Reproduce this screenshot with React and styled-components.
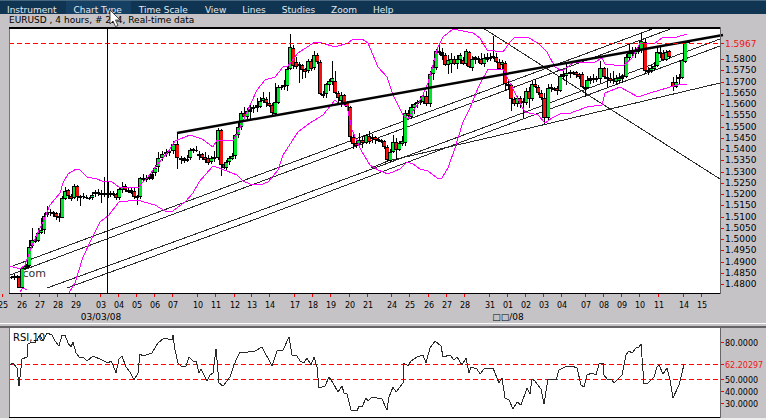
import styled, { createGlobalStyle } from 'styled-components'

const GlobalStyle = createGlobalStyle`
  body {
    margin: 0;
    background: #f0eff0;
    font-family: "DejaVu Sans", Verdana, sans-serif;
  }
`

const Window = styled.main`
  position: relative;
  overflow: hidden;
  background: #c6c3c6;
`

const MenuBar = styled.nav`
  display: flex;
  height: 14px;
  box-sizing: border-box;
  border-top: 1px solid #47667f;
  background: #103552;
  overflow: hidden;
`

const MenuButton = styled.button`
  height: 18px;
  padding: 0 8px;
  border: 0;
  background: ${({ $active }) => ($active ? '#163f64' : 'transparent')};
  color: #e3e9ee;
  font-family: inherit;
  font-size: 9px;
  line-height: 18px;
  white-space: nowrap;

  &:first-child {
    padding-left: 7px;
  }

  &:nth-child(-n + 3) {
    padding-right: 9px;
  }
`

const Title = styled.h1`
  height: 13px;
  margin: 0;
  padding-left: 9px;
  color: #000;
  font-size: 9px;
  font-weight: 400;
  line-height: 13px;
  white-space: nowrap;
`

const Chart = styled.svg`
  display: block;
  width: 100%;
  height: auto;
  overflow: hidden;
`

const RsiSection = styled.section`
  border-top: 1px solid #fff;

  &::before {
    content: '';
    display: block;
    height: 2px;
    border-bottom: 2px solid #656365;
  }
`

const Cursor = styled.svg`
  position: absolute;
  left: 109px;
  top: 9px;
  width: 12px;
  height: 19px;
  pointer-events: none;
`

const Thin = styled.path`
  fill: none;
  stroke: ${({ $color }) => $color || '#2a2a2a'};
  stroke-width: 1;
  shape-rendering: crispEdges;
`

const Level = styled.path`
  stroke: #f00;
  stroke-width: 1;
  stroke-dasharray: 5 3;
  shape-rendering: crispEdges;
`

const Tick = styled.path`
  stroke: #f00;
  stroke-width: 1;
  shape-rendering: crispEdges;
`

const Label = styled.text`
  fill: ${({ $color }) => $color || '#000'};
  font-size: ${({ $size }) => $size || 9}px;
  text-anchor: ${({ $anchor }) => $anchor || 'start'};
`

const MENU = ['Instrument', 'Chart Type', 'Time Scale', 'View', 'Lines', 'Studies', 'Zoom', 'Help']

// x, body top, body bottom, high, low, colour (g up, r down, k flat)
const CANDLES = `
11 277 278 276 279 k|14 276 278 274 280 k|17 276 278 275 279 k|19 277 288 276 288 r|22 268 288 267 288 g
25 266 269 264 269 g|27 264 268 262 268 k|29 247 266 240 267 g|32 240 246 228 248 g|35 240 242 236 243 k
38 233 241 228 242 g|41 230 233 218 234 g|44 216 230 213 234 g|47 212 215 206 217 k|50 212 213 209 216 k
53 212 214 211 217 r|56 213 217 212 220 r|59 216 218 213 222 k|62 198 218 196 218 g|65 191 199 187 200 g
68 190 196 189 199 r|71 196 199 194 201 r|74 186 198 184 199 g|77 186 197 185 201 r|80 196 198 195 206 g
83 196 197 193 199 k|86 197 198 195 199 k|89 198 199 197 200 r|92 195 198 192 200 g|95 192 194 190 197 k
98 192 194 189 196 k|101 193 195 190 203 k|104 193 195 177 197 k|108 193 195 182 198 k|110 194 195 191 197 k
113 193 195 191 196 g|116 194 198 193 200 r|119 189 198 187 200 g|122 187 190 182 193 g|125 186 190 184 192 r
128 190 192 187 193 r|131 190 193 188 194 k|134 191 197 188 199 r|137 196 198 195 205 r|140 178 197 177 199 g
143 178 180 174 181 k|146 178 180 175 182 g|149 177 179 174 180 k|152 174 179 171 180 k|155 168 173 165 176 g
158 158 167 152 172 g|162 154 158 151 161 g|166 152 154 149 157 k|169 151 153 150 156 k|173 144 151 141 154 g
177 144 158 133 169 r|181 158 160 156 164 r|184 158 161 157 163 k|187 159 161 155 162 g|190 150 158 148 160 g
193 149 151 148 153 r|196 150 151 146 152 k|199 154 156 151 160 k|202 154 158 153 160 r|205 157 160 152 163 r
208 158 163 155 165 r|211 158 162 156 164 g|214 157 159 151 162 k|218 130 158 128 160 g|221 130 165 129 176 r
224 164 168 162 169 r|226 162 168 160 170 g|229 158 162 156 165 g|232 156 159 153 160 g|235 135 156 134 159 g
238 127 135 121 138 g|241 113 127 111 130 g|244 113 117 107 119 r|247 111 117 108 119 g|250 109 112 103 120 k
253 107 109 105 113 k|257 105 108 98 112 k|260 101 107 97 108 g|263 98 101 92 103 g|266 99 103 97 107 r
269 103 106 92 107 r|272 105 113 103 116 r|275 102 114 83 115 g|278 87 103 85 104 g|281 87 88 85 90 k
284 85 87 80 90 k|287 69 86 66 91 g|290 47 69 34 70 g|293 48 66 45 69 r|296 62 67 57 69 r
299 64 66 62 83 k|302 65 70 64 79 r|305 69 72 68 78 r|308 61 71 59 73 g|311 61 69 59 71 r
314 55 68 51 70 g|317 55 62 53 64 r|320 62 94 60 95 r|323 94 96 91 98 r|326 84 94 83 98 g
329 81 85 79 91 g|332 78 82 61 85 g|335 81 93 71 94 r|338 93 98 91 103 r|341 95 101 92 107 g
344 95 103 94 106 r|347 102 107 101 110 r|350 107 137 106 142 r|353 137 144 134 149 r|356 143 146 139 148 r
359 140 144 133 146 g|362 140 143 136 148 r|366 135 143 134 144 g|369 136 142 131 144 r|372 137 139 134 143 k
375 137 140 136 144 r|378 139 141 138 142 k|381 140 142 139 143 r|384 141 147 140 149 r|387 147 160 145 162 r
390 152 161 149 162 g|393 142 152 135 153 g|396 142 150 138 160 r|399 143 150 141 151 g|402 141 144 136 146 g
405 113 143 110 146 g|408 113 116 110 118 r|411 107 117 104 119 g|414 104 108 103 114 g|417 102 104 100 108 k
420 101 103 96 105 k|423 96 102 93 104 g|426 96 104 91 106 r|430 74 104 71 107 g|433 67 74 60 80 g
436 51 68 49 70 g|439 51 53 44 55 k|442 52 56 48 60 k|445 55 65 53 66 r|448 60 65 55 74 g
451 59 64 53 73 g|454 59 64 56 65 r|457 59 64 55 69 g|460 55 60 53 64 g|463 60 64 57 65 r
466 51 64 49 66 g|469 52 67 51 68 r|472 59 68 56 71 g|475 57 60 56 64 k|478 58 60 56 63 k
481 59 64 53 65 r|484 58 64 54 67 g|487 57 60 53 62 k|490 57 59 53 61 k|493 56 58 36 59 k
496 57 62 53 63 r|499 62 69 59 70 r|502 62 65 60 70 g|505 63 84 61 91 r|508 84 86 81 90 r
511 85 99 84 111 r|514 99 104 97 106 r|517 98 104 96 107 g|520 98 104 96 108 r|523 101 103 98 118 g
526 91 103 88 105 g|529 91 99 87 108 r|532 84 99 81 101 g|535 84 87 79 88 r|538 87 93 85 95 r
541 93 98 90 100 r|544 98 118 93 124 r|548 88 118 84 120 g|551 87 89 84 92 k|554 88 90 87 91 k
557 88 91 86 95 r|560 76 91 74 92 g|563 74 77 70 80 k|566 73 76 62 85 g|570 72 74 70 78 k
573 72 74 71 75 r|576 72 75 71 78 r|579 74 77 73 79 r|582 74 87 72 88 r|585 87 89 83 97 r
587 80 88 76 89 g|590 78 81 76 84 k|593 78 80 74 83 k|596 78 80 76 82 r|600 68 79 61 83 g
604 68 77 67 79 r|607 77 79 68 88 k|610 78 81 73 83 r|613 79 81 71 84 r|616 78 82 75 85 g
619 78 81 73 83 g|622 76 79 74 83 k|626 57 77 54 78 g|629 53 58 44 60 g|632 50 54 47 58 k
635 50 54 47 58 g|638 50 52 47 54 k|641 41 50 33 53 g|645 42 71 38 74 r|648 70 72 67 75 r
651 68 71 65 73 g|654 66 69 62 71 g|657 52 66 47 67 g|660 52 54 45 58 r|663 53 60 50 61 r
666 52 60 50 61 g|669 51 57 50 59 r|673 82 87 77 91 r|676 82 87 75 88 g|679 77 79 74 85 g
682 60 78 59 79 g|685 42 62 41 63 g|688 41 43 40 43 r
`
  .trim()
  .split(/[|\n]/)
  .map((row) => {
    const [x, top, bottom, high, low, color] = row.split(' ')
    return { x: +x, top: +top, bottom: +bottom, high: +high, low: +low, color }
  })

const BAND_UPPER =
  'M10 266 20 269 25 265 33 243 43 222 50 205 60 193 63 183 68 174 76 169 80 170 87 177 97 179 102 181 112 182 119 187 138 188 142 183 148 177 157 165 168 152 175 141 190 135 202 139 213 147 217 140 233 141 238 132 247 112 257 90 265 80 275 77 283 67 288 66 298 53 315 42 322 43 335 47 348 43 353 39 362 39 368 43 378 67 387 77 393 95 403 115 408 119 422 97 428 83 438 47 443 37 453 29 473 33 480 38 487 50 503 52 510 42 515 37 527 37 538 43 547 52 555 67 562 71 573 63 595 62 602 58 605 64 623 66 632 58 640 43 655 43 662 38 677 37 687 34'

const BAND_LOWER =
  'M20 292 23 288 27 290M69 293 75 283 83 257 92 238 100 222 108 216 119 202 137 200 155 205 165 211 173 211 185 202 193 193 199 182 213 166 227 171 237 175 243 181 250 184 260 185 268 182 278 170 283 155 298 132 310 123 323 115 335 100 338 103 347 106 352 130 362 152 370 165 378 170 388 174 400 169 407 162 413 164 420 169 428 171 437 178 442 178 448 168 455 148 463 122 470 108 478 88 488 69 503 69 510 83 520 103 525 112 538 115 545 123 552 118 562 113 568 114 587 107 602 105 605 93 620 87 638 97 650 93 667 88 680 84 687 84'

const TREND_LINES = [
  'M10 267 655 28',
  'M10 275 673 28',
  'M47 288 256 212 496 123 720 39',
  'M67 288 256 219 496 129 720 46',
  'M371 168 388 161 496 136 720 83',
  'M483 28 720 179',
]

const RSI_LINE =
  'M9 366 13 363 17 368 19 386 22 359 27 357 28 344 32 342 35 343 40 335 43 341 47 333 52 335 55 341 59 346 62 335 65 335 68 343 71 347 73 342 76 353 80 358 83 357 87 361 93 356 102 360 108 363 111 361 113 365 116 373 119 359 122 356 126 367 130 372 134 380 138 373 140 354 143 356 152 353 158 343 164 338 172 340 173 335 175 350 178 363 181 366 186 366 189 357 193 361 196 361 199 373 201 369 207 381 210 375 213 373 216 349 219 383 223 386 230 377 233 368 236 360 240 352 244 353 248 352 255 351 262 347 265 353 269 360 272 366 277 351 283 350 289 337 292 355 297 356 300 361 304 363 307 358 311 365 314 357 317 367 319 388 325 386 329 377 333 383 338 392 342 386 344 393 347 394 351 410 357 411 359 406 362 407 366 398 368 401 372 397 382 399 387 410 389 397 393 387 396 392 403 383 404 363 408 366 411 361 417 357 423 355 426 363 430 348 435 341 441 346 443 357 450 355 454 360 457 357 462 365 466 358 469 373 471 367 477 369 480 374 484 369 493 368 497 378 499 383 502 378 505 398 509 400 513 409 517 402 521 405 527 388 530 394 532 379 535 381 541 389 544 404 548 379 556 380 559 370 565 367 572 366 577 368 581 385 584 387 587 375 592 373 596 375 599 364 603 363 604 375 607 379 612 380 614 383 622 375 626 355 629 351 632 353 636 348 639 347 641 344 644 384 648 383 654 377 657 367 659 365 663 374 667 368 670 380 673 398 679 385 682 373 684 364'

const PRICES = Array.from({ length: 21 }, (_, i) => ({
  text: (1.58 - i * 0.005).toFixed(4),
  y: Math.round(59 + i * 11.25),
}))

const DAYS = [
  [3, '25'], [22, '26'], [40, '27'], [58, '28'], [76, '29'], [101, '03'], [119, '04'],
  [137, '05'], [155, '06'], [173, '07'], [198, '10'], [216, '11'], [235, '12'], [252, '13'],
  [270, '14'], [295, '17'], [313, '18'], [331, '19'], [350, '20'], [368, '21'], [392, '24'],
  [410, '25'], [429, '26'], [447, '27'], [465, '28'], [490, '31'], [508, '01'], [526, '02'],
  [544, '03'], [562, '04'], [586, '07'], [604, '08'], [622, '09'], [640, '10'], [659, '11'],
  [684, '14'], [702, '15'],
]

const RSI_LEVELS = [
  { text: '80.0000', y: 343 },
  { text: '62.20297', y: 365, current: true },
  { text: '50.0000', y: 380 },
  { text: '40.0000', y: 392 },
  { text: '30.0000', y: 404 },
]

const FILLS = { g: '#00e52a', r: '#f01010', k: '#000' }

const Candle = ({ x, top, bottom, high, low, color }) => (
  <g shapeRendering="crispEdges">
    <rect x={x} y={high} width="1" height={low - high} />
    <rect x={x - 2} y={top} width="4" height={Math.max(bottom - top, 1)} />
    {bottom - top > 2 && (
      <rect x={x - 1} y={top + 1} width="3" height={bottom - top - 2} fill={FILLS[color]} />
    )}
  </g>
)

const PriceChart = () => (
  <Chart viewBox="0 27 766 296" role="img" aria-label="EURUSD 4 hour price chart">
    <rect x="9" y="27" width="711" height="266" fill="#fff" />
    <Label x="19" y="277" $size="11" $color="#333">.com</Label>
    {TREND_LINES.map((d) => (
      <Thin key={d} d={d} />
    ))}
    {CANDLES.map((candle) => (
      <Candle key={candle.x} {...candle} />
    ))}
    <Thin d={BAND_UPPER} $color="#f0f" />
    <Thin d={BAND_LOWER} $color="#f0f" />
    <path d="M177 133 723 35" stroke="#000" strokeWidth="2.500" />
    <Level d="M9 43.5H720" />
    <g shapeRendering="crispEdges">
      <rect x="9" y="27" width="1" height="266" fill="#777" />
      <rect x="9" y="27" width="711" height="2" />
      <rect x="9" y="293" width="711" height="1" />
      <rect x="720" y="27" width="1" height="267" fill="#666" />
      <rect x="107" y="28" width="1" height="265" />
    </g>

    <Tick d="M721 43.5H724" />
    <Label x="725" y="47" $color="#f01414">1.5967</Label>
    {PRICES.map(({ text, y }) => (
      <g key={text}>
        <Tick d={`M721 ${y + 0.5}H724`} />
        <Label x="725" y={y + 3}>{text}</Label>
      </g>
    ))}

    {DAYS.map(([x, text]) => (
      <g key={x}>
        <Tick d={`M${x - 0.5} 294V297`} />
        <Label x={x} y="308" $size="8" $anchor="middle">{text}</Label>
      </g>
    ))}
    <Label x="101" y="320" $anchor="middle">03/03/08</Label>
    <Label x="508" y="320" $anchor="middle">□□/08</Label>
  </Chart>
)

const RsiChart = () => (
  <Chart viewBox="0 328 766 90" role="img" aria-label="RSI study">
    <rect x="9" y="328" width="711" height="90" fill="#fff" />
    <Label x="13" y="341" $size="10">RSI,10</Label>
    <Level d="M9 364.5H720" />
    <Level d="M9 379.5H720" />
    <Thin d={RSI_LINE} />
    <g shapeRendering="crispEdges">
      <rect x="9" y="328" width="1" height="90" fill="#777" />
      <rect x="720" y="328" width="1" height="90" fill="#666" />
      <rect x="9" y="417" width="711" height="1" />
    </g>
    {RSI_LEVELS.map(({ text, y, current }) => (
      <g key={text}>
        <Tick d={`M721 ${y - 0.5}H724`} />
        <Label x="725" y={y + 3} $size="8" $color={current && '#f01414'}>{text}</Label>
      </g>
    ))}
  </Chart>
)

const App = () => (
  <>
    <GlobalStyle />
    <Window>
      <MenuBar>
        {MENU.map((item) => (
          <MenuButton key={item} type="button" $active={item === 'Chart Type'}>
            {item}
          </MenuButton>
        ))}
      </MenuBar>
      <Title>EURUSD , 4 hours, # 224, Real-time data</Title>
      <PriceChart />
      <RsiSection>
        <RsiChart />
      </RsiSection>
      <Cursor viewBox="0 0 12 19" aria-hidden="true">
        <path d="M1 1V15L4 12 6.500 17.500 9 16.500 6.500 11H11Z" fill="#fff" stroke="#222" strokeWidth="0.8" />
      </Cursor>
    </Window>
  </>
)

export default App
